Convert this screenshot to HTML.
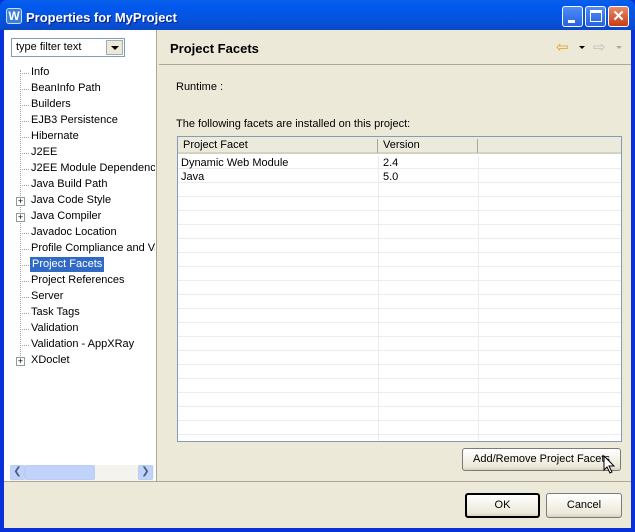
<!DOCTYPE html><html><head><style>
*{margin:0;padding:0;box-sizing:border-box}
body{width:635px;height:532px;overflow:hidden;font-family:"Liberation Sans",sans-serif;font-size:11px;color:#000;background:#0831d9;position:relative}
.abs{position:absolute}
.title{left:0;top:0;width:635px;height:30px;background:linear-gradient(#0a5fe8,#0058ee 20%,#0454e0 60%,#0a49c8);border-radius:7px 7px 0 0}
.frame{left:4px;top:30px;width:627px;height:498px;background:#ece9d8}
.btn{border:1px solid #003c74;border-radius:3px;background:linear-gradient(#fff,#ece9d8 85%,#d6d0c0);text-align:center;font-size:11px}
.tree div{position:absolute;left:31px;height:15px;line-height:15px;white-space:nowrap}
.dot{position:absolute;left:20px;width:9px;border-top:1px dotted #a0a0a0}
.plus{position:absolute;left:16px;width:9px;height:9px;border:1px solid #919b9c;background:#fff;font-size:9px;line-height:7px;text-align:center}
.row{position:absolute;left:0;width:443px;height:14px;border-bottom:1px solid #ececec}
</style></head><body>
<div class="abs title"></div>
<div class="abs" style="left:6px;top:8px;width:16px;height:16px;background:#3a7fd8;border:1px solid #cde;border-radius:3px;color:#fff;font-weight:bold;font-size:12px;line-height:14px;text-align:center">W</div>
<div class="abs" style="left:26px;top:10px;color:#fff;font-weight:bold;font-size:13px;text-shadow:1px 1px #0a1e80">Properties for MyProject</div>
<div class="abs" style="left:562px;top:6px;width:21px;height:21px;border:1px solid #fff;border-radius:3px;background:linear-gradient(#4f8cf5,#2663e0)"><div class="abs" style="left:5px;top:13px;width:7px;height:3px;background:#fff"></div></div>
<div class="abs" style="left:585px;top:6px;width:21px;height:21px;border:1px solid #fff;border-radius:3px;background:linear-gradient(#4f8cf5,#2663e0)"><div class="abs" style="left:4px;top:3px;width:12px;height:12px;border:1px solid #fff;border-top-width:3px"></div></div>
<div class="abs" style="left:608px;top:6px;width:21px;height:21px;border:1px solid #fff;border-radius:3px;background:linear-gradient(#e88a6a,#c83b14);color:#fff;font-weight:bold;font-size:15px;line-height:19px;text-align:center">✕</div>
<div class="abs frame"></div>
<div class="abs" style="left:4px;top:30px;width:153px;height:451px;background:#fff;border-right:1px solid #aca899"></div>
<div class="abs" style="left:11px;top:38px;width:114px;height:19px;border:1px solid #7f9db9;background:#fff;padding:2px 4px;font-size:11px">type filter text</div>
<div class="abs" style="left:106px;top:40px;width:17px;height:15px;background:#ece9d8;border:1px solid #aaa"><div class="abs" style="left:4px;top:5px;border-left:4px solid transparent;border-right:4px solid transparent;border-top:4px solid #000"></div></div>
<div class="abs" style="left:20px;top:70px;height:292px;border-left:1px dotted #a0a0a0"></div>
<div class="abs tree" style="left:0;top:1px;width:155px;height:479px;overflow:hidden">
<span class="dot" style="top:72px"></span><div style="top:64px">Info</div>
<span class="dot" style="top:88px"></span><div style="top:80px">BeanInfo Path</div>
<span class="dot" style="top:104px"></span><div style="top:96px">Builders</div>
<span class="dot" style="top:120px"></span><div style="top:112px">EJB3 Persistence</div>
<span class="dot" style="top:136px"></span><div style="top:128px">Hibernate</div>
<span class="dot" style="top:152px"></span><div style="top:144px">J2EE</div>
<span class="dot" style="top:168px"></span><div style="top:160px">J2EE Module Dependencies</div>
<span class="dot" style="top:184px"></span><div style="top:176px">Java Build Path</div>
<span class="plus" style="top:196px">+</span><div style="top:192px">Java Code Style</div>
<span class="plus" style="top:212px">+</span><div style="top:208px">Java Compiler</div>
<span class="dot" style="top:232px"></span><div style="top:224px">Javadoc Location</div>
<span class="dot" style="top:248px"></span><div style="top:240px">Profile Compliance and Validation</div>
<span class="dot" style="top:264px"></span><div style="top:256px;left:30px;background:#316ac5;color:#fff;padding:0 2px">Project Facets</div>
<span class="dot" style="top:280px"></span><div style="top:272px">Project References</div>
<span class="dot" style="top:296px"></span><div style="top:288px">Server</div>
<span class="dot" style="top:312px"></span><div style="top:304px">Task Tags</div>
<span class="dot" style="top:328px"></span><div style="top:320px">Validation</div>
<span class="dot" style="top:344px"></span><div style="top:336px">Validation - AppXRay</div>
<span class="plus" style="top:356px">+</span><div style="top:352px">XDoclet</div>
</div>
<div class="abs" style="left:10px;top:465px;width:144px;height:16px;background:#f4f3ee"></div>
<div class="abs" style="left:10px;top:465px;width:15px;height:15px;border:1px solid #b9cdf5;background:#c1d3fb;border-radius:2px;font-size:10px;text-align:center;line-height:12px;color:#4d6185">❮</div>
<div class="abs" style="left:25px;top:465px;width:70px;height:15px;border:1px solid #b9cdf5;background:#c1d3fb;border-radius:2px"></div>
<div class="abs" style="left:138px;top:465px;width:15px;height:15px;border:1px solid #b9cdf5;background:#c1d3fb;border-radius:2px;font-size:10px;text-align:center;line-height:12px;color:#4d6185">❯</div>
<div class="abs" style="left:159px;top:64px;width:472px;height:1px;background:#aca899"></div>
<div class="abs" style="left:170px;top:41px;font-weight:bold;font-size:13px">Project Facets</div>
<div class="abs" style="left:556px;top:38px;color:#e0a020;font-size:15px">⇦</div>
<div class="abs" style="left:579px;top:46px;border-left:3px solid transparent;border-right:3px solid transparent;border-top:3px solid #000"></div>
<div class="abs" style="left:593px;top:38px;color:#c0c0c0;font-size:15px">⇨</div>
<div class="abs" style="left:616px;top:46px;border-left:3px solid transparent;border-right:3px solid transparent;border-top:3px solid #aaa"></div>
<div class="abs" style="left:176px;top:81px">Runtime :</div>
<div class="abs" style="left:176px;top:118px">The following facets are installed on this project:</div>
<div class="abs" style="left:177px;top:136px;width:445px;height:306px;border:1px solid #7f9db9;background:#fff;overflow:hidden">
 <div class="abs" style="left:0;top:0;width:443px;height:17px;background:#ebeadb;border-bottom:2px solid #d6d2c2"></div>
 <div class="abs" style="left:5px;top:2px">Project Facet</div>
 <div class="abs" style="left:205px;top:2px">Version</div>
 <div class="abs" style="left:199px;top:2px;width:1px;height:14px;background:#aca899"></div>
 <div class="abs" style="left:299px;top:2px;width:1px;height:14px;background:#aca899"></div>
 <div class="row" style="top:18px"></div><div class="row" style="top:32px"></div><div class="row" style="top:46px"></div><div class="row" style="top:60px"></div><div class="row" style="top:74px"></div><div class="row" style="top:88px"></div><div class="row" style="top:102px"></div><div class="row" style="top:116px"></div><div class="row" style="top:130px"></div><div class="row" style="top:144px"></div><div class="row" style="top:158px"></div><div class="row" style="top:172px"></div><div class="row" style="top:186px"></div><div class="row" style="top:200px"></div><div class="row" style="top:214px"></div><div class="row" style="top:228px"></div><div class="row" style="top:242px"></div><div class="row" style="top:256px"></div><div class="row" style="top:270px"></div><div class="row" style="top:284px"></div>
 <div class="abs" style="left:200px;top:19px;width:1px;height:290px;background:#ececec"></div>
 <div class="abs" style="left:300px;top:19px;width:1px;height:290px;background:#ececec"></div>
 <div class="abs" style="left:3px;top:20px">Dynamic Web Module</div>
 <div class="abs" style="left:205px;top:20px">2.4</div>
 <div class="abs" style="left:3px;top:34px">Java</div>
 <div class="abs" style="left:205px;top:34px">5.0</div>
</div>
<div class="abs btn" style="left:462px;top:448px;width:159px;height:23px;border-color:#7a7a7a;line-height:21px;white-space:nowrap;overflow:hidden">Add/Remove Project Facets</div>
<div class="abs" style="left:4px;top:481px;width:627px;height:1px;background:#aca899"></div>
<div class="abs btn" style="left:465px;top:493px;width:75px;height:25px;border:2px solid #000;line-height:21px">OK</div>
<div class="abs btn" style="left:546px;top:493px;width:76px;height:25px;border-color:#7a7a7a;line-height:23px">Cancel</div>
<svg class="abs" style="left:603px;top:455px" width="13" height="20"><path d="M1 1 L1 15 L4 12 L7 18 L9 17 L6 11 L11 11 Z" fill="#fff" stroke="#000"/></svg>
</body></html>
